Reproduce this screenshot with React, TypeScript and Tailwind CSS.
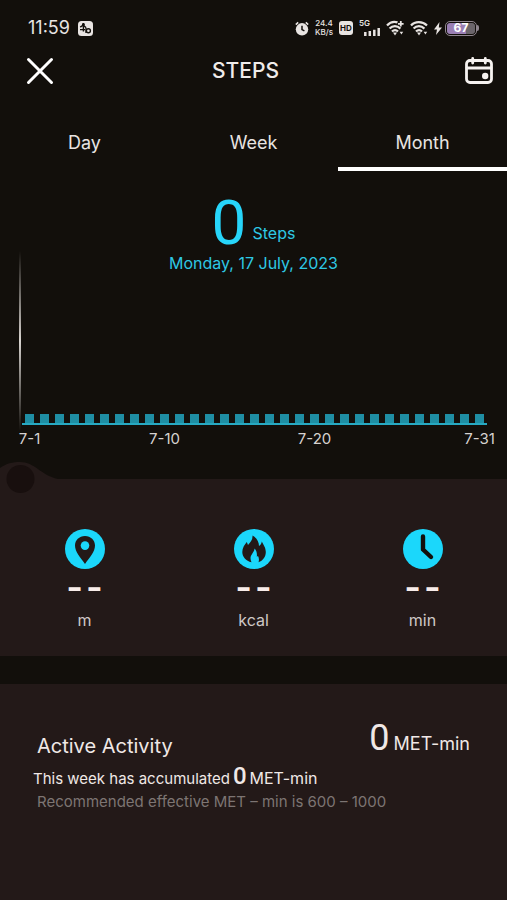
import React from "react";

const DAYS = Array.from({ length: 31 }, (_, i) => i + 1);
const LABELLED_DAYS = [1, 10, 20, 31];

function WifiIcon({ plus = false }: { plus?: boolean }) {
  return (
    <svg width="18" height="16" viewBox="0 0 18 16" fill="none" stroke="#e8e4e2" strokeWidth="2.2" aria-hidden="true">
      <path d={plus ? "M1 5.5C4 2.2 8 1.2 11.5 2.4" : "M1 5.5C5 1 12.5 1 17 5.5"} />
      <path d="M3.6 8.6C6.6 5.4 11.2 5.4 14.4 8.6" />
      <path d="M6 11.5c1.8-1.8 4.3-1.8 6 0" />
      <path d="M7 12.6h4L9 15.4z" fill="#e8e4e2" stroke="none" />
      <path d="M13.6 11.8h3.6L15.4 14.6z" fill="#e8e4e2" stroke="none" />
      {plus && <path d="M14.8 1v5.6M12 3.8h5.6" strokeWidth="1.8" />}
    </svg>
  );
}

function StatusBar() {
  return (
    <div className="flex h-14 items-center justify-between px-7 text-[#e8e4e2]">
      <div className="flex items-center gap-2">
        <span className="text-lg leading-5">11:59</span>
        <svg width="15" height="15" viewBox="0 0 15 15" aria-hidden="true">
          <rect width="15" height="15" rx="3.5" fill="#e8e4e2" />
          <g stroke="#120f0b" strokeWidth="1.4" fill="none">
            <path d="M5.4 2v8.5M2.2 6.2l3-2 3 2.5M2 8.6h5" />
            <circle cx="5.4" cy="3.6" r="0.8" />
            <circle cx="10.4" cy="9.8" r="2" />
            <path d="M8 7v5" />
          </g>
        </svg>
      </div>
      <div className="flex items-center gap-1.5">
        <svg width="14" height="15" viewBox="0 0 14 15" aria-hidden="true">
          <circle cx="7" cy="8.3" r="6.2" fill="#e8e4e2" />
          <path d="M0.8 3.6l2.4-2.2M13.2 3.6l-2.4-2.2" stroke="#e8e4e2" strokeWidth="1.6" />
          <path d="M7 4.8v3.8l2.4 1.2" stroke="#120f0b" strokeWidth="1.5" fill="none" />
        </svg>
        <span className="flex w-[18px] flex-col items-center text-[8px] leading-[9px] font-medium">
          <span>24.4</span>
          <span>KB/s</span>
        </span>
        <span className="flex h-3.5 w-3.5 items-center justify-center rounded-[3px] bg-[#e8e4e2] text-[8px] leading-[9px] font-bold text-[#120f0b]">
          HD
        </span>
        <div className="flex h-5 w-[21px] flex-col">
          <span className="text-[8px] leading-[10px] font-semibold">5G</span>
          <svg width="21" height="8" viewBox="0 0 21 8" aria-hidden="true">
            <path d="M6.3 8V4M10.8 8V3M15.3 8V1.8M19.7 8V0" stroke="#e8e4e2" strokeWidth="2.5" />
          </svg>
        </div>
        <WifiIcon plus />
        <WifiIcon />
        <div className="flex items-center gap-[3px]">
          <svg width="8" height="13" viewBox="0 0 8 13" fill="#e8e4e2" aria-hidden="true">
            <path d="M5.5 0L0 7.4h3L2 13l6-7.6H4.8z" />
          </svg>
          <div className="flex items-center">
            <div className="flex h-[15px] w-8 rounded-[5px] border border-[#8f858f] p-px">
              <span className="flex w-full items-center justify-center rounded-[3px] bg-linear-to-r from-[#9a7fb4] from-67% to-[#6b656b] to-67% text-xs leading-3 font-bold text-white">
                67
              </span>
            </div>
            <span className="h-1.5 w-0.5 rounded-r-sm bg-[#8f858f]" />
          </div>
        </div>
      </div>
    </div>
  );
}

function Header() {
  return (
    <header className="flex h-[30px] items-center pr-3 pl-6">
      <button type="button" aria-label="Close" className="flex w-8 justify-center">
        <svg width="28" height="28" viewBox="0 0 28 28" stroke="#fff" strokeWidth="3" strokeLinecap="round" aria-hidden="true">
          <path d="M2.5 2.5l23 23M25.5 2.5l-23 23" />
        </svg>
      </button>
      <h1 className="flex-1 pr-7 text-center text-[21px] leading-[30px] font-medium text-[#f0ecea]">STEPS</h1>
      <button type="button" aria-label="Pick a date" className="flex w-8 justify-center">
        <svg width="30" height="28" viewBox="0 0 30 28" fill="none" stroke="#f6f2f0" strokeWidth="2.8" strokeLinecap="round" aria-hidden="true">
          <rect x="2.5" y="3.5" width="25" height="22" rx="3.5" />
          <path d="M3 11h24M8.7 1.5v4.5M21.3 1.5v4.5" />
          <circle cx="21.2" cy="19" r="3.2" fill="#f6f2f0" stroke="none" />
        </svg>
      </button>
    </header>
  );
}

function Tabs() {
  const tabs = ["Day", "Week", "Month"];
  return (
    <div role="tablist" className="mt-8 grid grid-cols-3 text-lg leading-6 text-[#e8e4e2]">
      {tabs.map((tab) => (
        <button
          key={tab}
          type="button"
          role="tab"
          aria-selected={tab === "Month"}
          className={
            tab === "Month"
              ? "h-[53px] border-b-4 border-white"
              : "h-[53px] border-b-4 border-transparent"
          }
        >
          {tab}
        </button>
      ))}
    </div>
  );
}

function Chart() {
  return (
    <div className="pr-5 pl-[19px]">
      <div className="flex gap-px">
        <div className="h-[180px] w-0.5 bg-linear-to-b from-transparent via-[#d8d4d0] to-transparent" />
        <div className="flex h-[174px] flex-1 items-end border-b-2 border-[#27a9c2]">
          {DAYS.map((day) => (
            <div key={day} className="flex flex-1 justify-center">
              <div className="h-[9px] w-[9px] bg-[#1f8ea4]" />
            </div>
          ))}
        </div>
      </div>
      <div className="ml-[3px] flex h-4 text-[15px] leading-4 text-[#d6d2d0]">
        {DAYS.map((day) => (
          <div key={day} className="flex w-0 flex-1 justify-center whitespace-nowrap">
            {LABELLED_DAYS.includes(day) && <span>7-{day}</span>}
          </div>
        ))}
      </div>
    </div>
  );
}

function Metric({ unit, children }: { unit: string; children: React.ReactNode }) {
  return (
    <div className="flex flex-col items-center">
      <svg width="40" height="40" viewBox="0 0 40 40" aria-hidden="true">
        <circle cx="20" cy="20" r="20" fill="#1bd7fb" />
        {children}
      </svg>
      <div className="flex h-[39px] items-center justify-center gap-[3px] pb-1 text-4xl leading-9 font-semibold text-[#f8ece9]">
        <span>-</span>
        <span>-</span>
      </div>
      <span className="text-base leading-6 text-[#cfc8c6]">{unit}</span>
    </div>
  );
}

export default function App() {
  return (
    <main className="flex min-h-screen flex-col bg-[#120f0b] font-[Inter,sans-serif]">
      <StatusBar />
      <Header />
      <Tabs />
      <section className="mt-6 text-center text-[#2ec8e4]">
        <p className="flex h-14 items-end justify-center gap-1.5">
          <span className="font-[Roboto] text-[62px] leading-14 text-[#27d5fa]">0</span>
          <span className="text-base leading-9">Steps</span>
        </p>
        <p className="text-base leading-6">Monday, 17 July, 2023</p>
      </section>
      <div className="-mt-6">
        <Chart />
      </div>
      <section className="relative mt-8 grid grid-cols-3 bg-[#231918] pt-[50px] pb-6">
        <svg className="absolute -top-[18px] left-0" width="64" height="34" viewBox="0 0 64 34" aria-hidden="true">
          <path d="M0 7C6 2.5 13 1 20 1c15 0 20 13 38 17H0z" fill="#231918" />
          <circle cx="20.5" cy="18" r="14" fill="#180f0e" />
        </svg>
        <Metric unit="m">
          <path d="M20 7c-5.8 0-10 4.3-10 9.6C10 23 15.5 28.5 20 35 24.5 28.5 30 23 30 16.6 30 11.3 25.8 7 20 7z" fill="#231918" />
          <circle cx="20" cy="16.6" r="4.3" fill="#1bd7fb" />
        </Metric>
        <Metric unit="kcal">
          <path d="M18.5 6.500C23 9 25 13 25 17c1.500-1 2.500-2.500 2.800-4.500C29.500 16 31.800 18.500 31.800 23c0 5-2.800 8.500-7.300 10.300.8-2.300.5-4.300-.5-6.300l-1.200.8C23.300 24.500 22.500 21.500 20.500 19.500c0 3.500-4 6-4 9.500 0 1.500.4 3 1 4.300C12 32 8.300 28 8.300 23c0-4 2.200-7.200 4.500-10l1.200 3c2.500-2.800 4.800-5 4.500-9.500z" fill="#231918" />
        </Metric>
        <Metric unit="min">
          <path d="M20 7.5v13l8 7.500" stroke="#120f0b" strokeWidth="4.4" strokeLinecap="round" strokeLinejoin="round" fill="none" />
        </Metric>
      </section>
      <section className="mt-7 flex-1 bg-[#231918] px-[37px] pt-9 text-[#f0e8e6]">
        <div className="flex h-11 items-end justify-between">
          <h2 className="text-xl leading-9">Active Activity</h2>
          <p className="flex items-baseline gap-1 text-lg leading-10">
            <span className="font-[Roboto] text-4xl leading-10">0</span>
            <span>MET-min</span>
          </p>
        </div>
        <p className="-ml-1 flex items-baseline gap-[3px] text-[15px] leading-6">
          <span>This week has accumulated</span>
          <span className="font-[Roboto] text-2xl leading-6 font-medium">0</span>
          <span className="text-base leading-6">MET-min</span>
        </p>
        <p className="text-[15px] leading-[22px] text-[#7d7573]">Recommended effective MET – min is 600 – 1000</p>
      </section>
    </main>
  );
}
